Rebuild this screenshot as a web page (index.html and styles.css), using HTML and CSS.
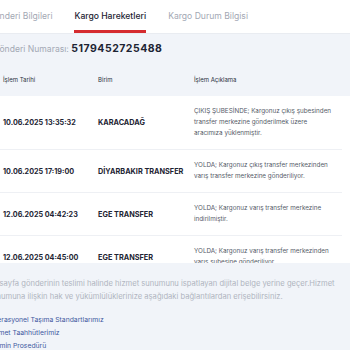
FILE: index.html
```html
<!DOCTYPE html>
<html>
  <head>
    <meta http-equiv="Content-type" content="text/html; charset=utf-8">
    <title>Kargo Hareketleri</title>
    <link rel="stylesheet" href="styles.css">
  </head>
  <body>
    <div class="page">
      <div class="tabs">
        <a class="tab" href="#!/bilgi">Gönderi Bilgileri</a>
        <a class="tab active" href="#!/hareket">Kargo Hareketleri</a>
        <a class="tab" href="#!/durum">Kargo Durum Bilgisi</a>
      </div>
      <div class="panel">
        <div class="shipment">Gönderi Numarası: <b>5179452725488</b></div>
        <div class="moves_head">
          <span>İşlem Tarihi</span>
          <span>Birim</span>
          <span>İşlem Açıklama</span>
        </div>
        <div class="moves">
          <div class="move">
            <span class="date">10.06.2025 13:35:32</span>
            <span class="unit">KARACADAĞ</span>
            <span class="desc">ÇIKIŞ ŞUBESİNDE; Kargonuz çıkış şubesinden transfer merkezine gönderilmek üzere aracımıza yüklenmiştir.</span>
          </div>
          <div class="move">
            <span class="date">10.06.2025 17:19:00</span>
            <span class="unit">DİYARBAKIR TRANSFER</span>
            <span class="desc">YOLDA; Kargonuz çıkış transfer merkezinden varış transfer merkezine gönderiliyor.</span>
          </div>
          <div class="move">
            <span class="date">12.06.2025 04:42:23</span>
            <span class="unit">EGE TRANSFER</span>
            <span class="desc">YOLDA; Kargonuz varış transfer merkezine indirilmiştir.</span>
          </div>
          <div class="move">
            <span class="date">12.06.2025 04:45:00</span>
            <span class="unit">EGE TRANSFER</span>
            <span class="desc">YOLDA; Kargonuz varış transfer merkezinden varış şubesine gönderiliyor.</span>
          </div>
        </div>
        <div class="notice">
          <p>Bu sayfa gönderinin teslimi halinde hizmet sunumunu ispatlayan dijital belge yerine geçer.Hizmet<br>sunumuna ilişkin hak ve yükümlülüklerinize aşağıdaki bağlantılardan erişebilirsiniz.</p>
          <a href="#!/standart">Operasyonel Taşıma Standartlarımız</a>
          <a href="#!/taahhut">Hizmet Taahhütlerimiz</a>
          <a href="#!/tazmin">Tazmin Prosedürü</a>
        </div>
      </div>
    </div>
  </body>
</html>
```

FILE: styles.css
```css
body,html {height:100%; margin:0; background:#f1f4f9; overflow:hidden;}
body {font-family:Inter, "DejaVu Sans", sans-serif; color:#1d2433;}
.page {margin-left:-12px; width:362px;}

.tabs {display:flex; gap:22px; height:34px; padding-left:0; background:#fff; border-bottom:1px solid #e9ecf1; box-sizing:border-box;}
.tab {display:block; padding-top:9px; font-size:8.6px; line-height:14px; color:#a3a8b4; text-decoration:none; box-sizing:border-box;}
.tab.active {color:#1d2433; font-weight:500; border-bottom:3px solid #d52b2f;}

.shipment {padding:8px 0 7px 5px; font-size:8.6px; line-height:14px; color:#a3a8b4;}
.shipment b {font-size:10.5px; letter-spacing:.5px; color:#1d2433; font-weight:700;}

.moves_head, .move {display:grid; grid-template-columns:95px 96px 1fr; padding-left:15px;}
.moves_head {padding-top:12px; padding-bottom:11px; font-size:6px; line-height:10px; color:#2a3140;}

.moves {height:167px; overflow:hidden; background:#fff;}
.move {align-items:center; margin-right:8px; padding-top:10px; padding-bottom:10px; border-bottom:1px solid #eef0f4;}
.date {font-size:7.2px; font-weight:650;}
.unit {font-size:7.3px; font-weight:650;}
.desc {font-size:6.3px; line-height:11px; color:#555b68; padding-right:7px;}

.notice {padding:14px 0 0 0;}
.notice p {margin:0 0 10px; font-size:7.6px; line-height:13px; color:#b0b5c0; white-space:nowrap;}
.notice a {display:block; font-size:6.8px; line-height:13px; color:#41599f; text-decoration:none;}
```
